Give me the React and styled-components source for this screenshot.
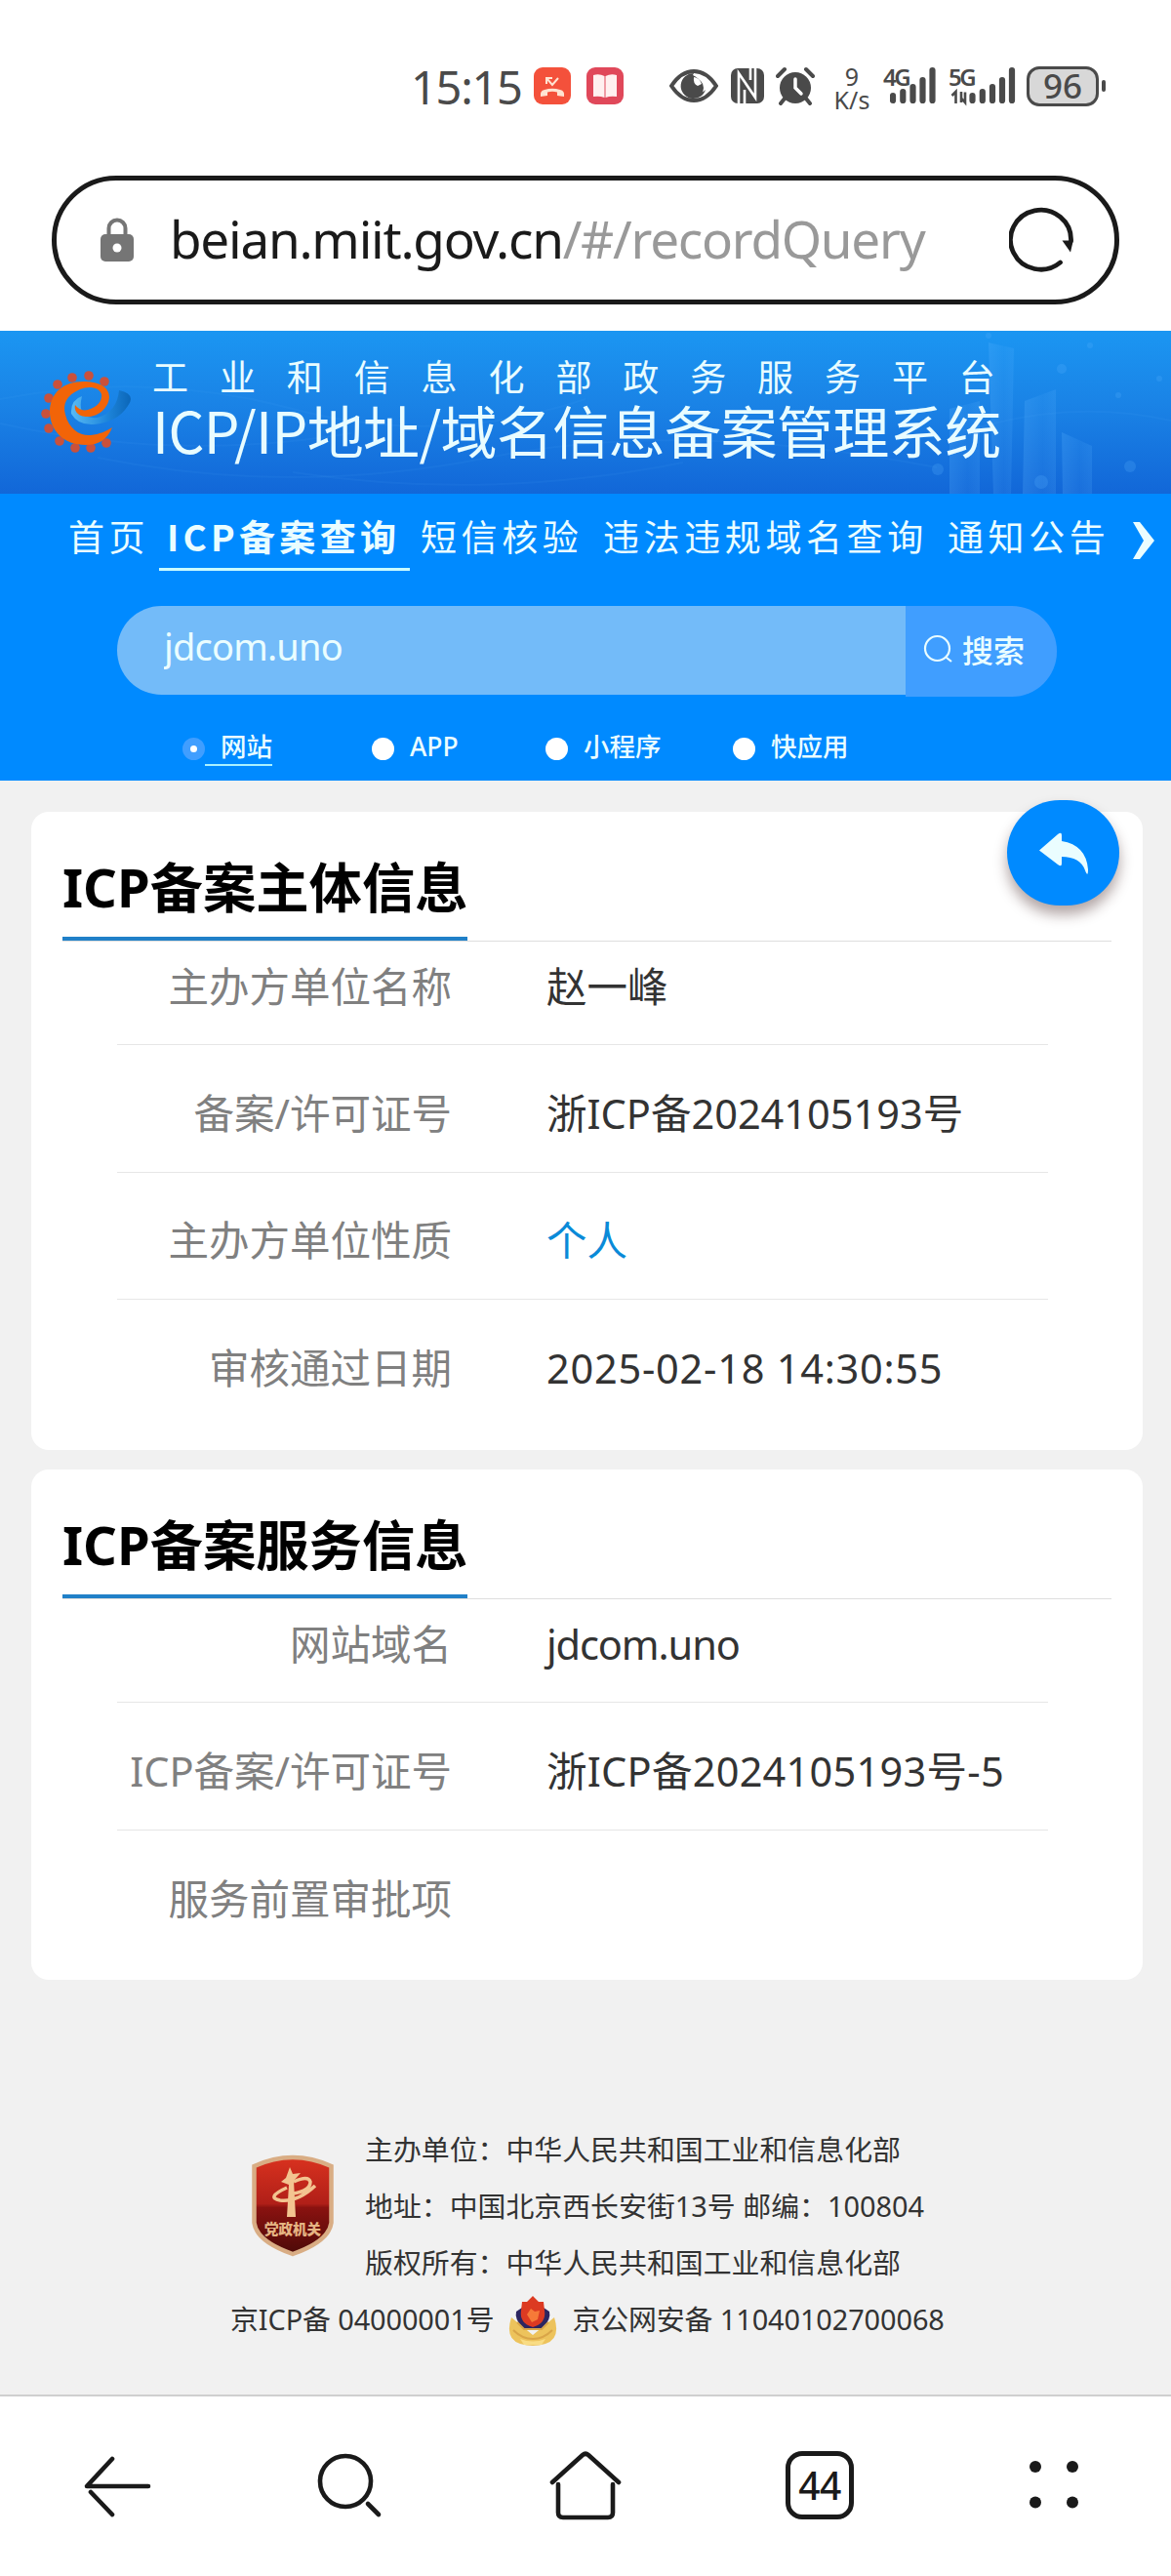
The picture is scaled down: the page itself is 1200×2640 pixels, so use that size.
import React, { useState } from "react";
import styled, { createGlobalStyle } from "styled-components";

const GlobalStyle = createGlobalStyle`
  * {
    box-sizing: border-box;
  }
  body {
    margin: 0;
    background: #f1f1f1;
    font-family: "Noto Sans", "Noto Sans CJK SC", sans-serif;
  }
`;

const StyledPage = styled.div`
  width: 1200px;
  height: 2640px;
  display: flex;
  flex-direction: column;
  overflow: hidden;
  background: #f1f1f1;
`;

/* phone status bar */
const StyledStatusBar = styled.div`
  height: 180px;
  padding: 66px 0 0 421px;
  display: flex;
  align-items: flex-start;
  background: #fff;
  color: #4a4a4a;
`;
const StyledClock = styled.div`
  width: 126px;
  height: 44px;
  font-size: 47px;
  line-height: 46px;
  letter-spacing: -1.3px;
  white-space: nowrap;
`;
const StyledStatusIcon = styled.svg`
  flex: none;
  width: ${p => p.$w}px;
  height: 44px;
  margin-right: ${p => p.$gap}px;
`;
const StyledSpeed = styled.div`
  flex: none;
  width: 42px;
  margin-right: 11px;
  text-align: center;
  font-size: 25px;
  line-height: 24px;
`;
const StyledNetwork = styled.div`
  flex: none;
  display: flex;
  width: ${p => p.$w}px;
  margin-right: ${p => p.$gap}px;
`;
const StyledNetworkType = styled.div`
  flex: none;
  width: ${p => p.$w}px;
  font-size: 24px;
  font-weight: 600;
  line-height: 26px;
  letter-spacing: -2.5px;
  white-space: nowrap;
`;
const StyledBattery = styled.div`
  flex: none;
  width: 74px;
  height: 41px;
  margin-top: 2px;
  border: 3.5px solid #4a4a4a;
  border-radius: 13px;
  background: #d8d8d8;
  font-size: 35px;
  font-weight: 500;
  line-height: 34px;
  text-align: center;
`;
const StyledBatteryTip = styled.div`
  width: 4px;
  height: 12px;
  margin: 16px 0 0 3px;
  border-radius: 2px;
  background: #4a4a4a;
`;

/* address bar */
const StyledAddressArea = styled.div`
  height: 159px;
  padding: 0 53px;
  background: #fff;
`;
const StyledAddressBar = styled.div`
  height: 132px;
  padding: 0 42px 0 45px;
  border: 5px solid #1a1a1a;
  border-radius: 66px;
  display: flex;
  align-items: center;
`;
const StyledUrl = styled.div`
  flex: 1;
  margin: 0 0 2px 37px;
  color: #1a1a1a;
  font-size: 53px;
  line-height: 70px;
  letter-spacing: -1.25px;
  white-space: nowrap;
`;
const StyledUrlPath = styled.span`
  color: #999;
`;

/* site banner */
const StyledBanner = styled.div`
  position: relative;
  height: 167px;
  display: flex;
  padding-left: 38px;
  background: linear-gradient(180deg, #1b96f2 0%, #1a83e6 45%, #1267d8 100%);
`;
const StyledBannerArt = styled.svg`
  position: absolute;
  top: 0;
  left: 0;
`;
const StyledLogo = styled.svg`
  position: relative;
  width: 100px;
  height: 90px;
  margin-top: 38px;
`;
const StyledTitles = styled.div`
  position: relative;
  margin: 18px 0 0 18px;
  color: #e8fcff;
  font-family: "Noto Sans CJK SC", sans-serif;
  white-space: nowrap;
`;
const StyledPlatform = styled.div`
  font-size: 37px;
  line-height: 56px;
  letter-spacing: 31.9px;
`;
const StyledSystem = styled.div`
  font-size: 58px;
  line-height: 54px;
  letter-spacing: -0.6px;
`;

/* blue search panel */
const StyledPanel = styled.div`
  height: 294px;
  background: #008aff;
  color: #eafdff;
`;
const StyledNav = styled.div`
  height: 115px;
  padding: 20px 0 0 59px;
  display: flex;
  align-items: flex-start;
`;
const StyledNavItem = styled.div`
  height: 59px;
  width: ${p => p.$w}px;
  padding-left: ${p => (p.$active ? 8 : 11)}px;
  border-bottom: 3px solid ${p => (p.$active ? "#c9fbff" : "transparent")};
  font-family: "Noto Sans CJK SC", sans-serif;
  font-size: 37px;
  font-weight: ${p => (p.$active ? 700 : 400)};
  line-height: 46px;
  letter-spacing: ${p => (p.$active ? 4.3 : 4.6)}px;
  white-space: nowrap;
  cursor: pointer;
`;
const StyledNavMore = styled.svg`
  width: 26px;
  height: 40px;
  margin: 8px 0 0 12px;
`;
const StyledSearch = styled.div`
  height: 93px;
  margin: 0 117px 0 120px;
  display: flex;
  align-items: flex-start;
`;
const StyledSearchInput = styled.input`
  width: 808px;
  height: 91px;
  padding: 0 0 9px 48px;
  border: none;
  outline: none;
  border-radius: 46px 0 0 46px;
  background: #73bbf9;
  color: #eafdff;
  font-family: "Noto Sans", sans-serif;
  font-size: 38px;
  letter-spacing: -0.8px;
`;
const StyledSearchBtn = styled.button`
  width: 155px;
  height: 93px;
  padding: 0 0 5px 18px;
  border: none;
  border-radius: 0 46px 46px 0;
  background: #409eff;
  color: #eafdff;
  display: flex;
  align-items: center;
  gap: 9px;
  font-family: "Noto Sans CJK SC", sans-serif;
  font-size: 32px;
  font-weight: 500;
  cursor: pointer;
`;
const StyledTypes = styled.div`
  display: flex;
  padding: 33px 0 0 187px;
`;
const StyledType = styled.div`
  width: ${p => p.$w}px;
  height: 40px;
  display: flex;
  align-items: center;
  cursor: pointer;
`;
const StyledTypeDot = styled.div`
  width: 23px;
  height: 23px;
  border-radius: 50%;
  border: ${p => (p.$active ? "8.5px solid #409eff" : "none")};
  background: #fff;
`;
const StyledTypeName = styled.div`
  height: 36px;
  padding-left: 16px;
  border-bottom: 2px solid ${p => (p.$active ? "#a9f0ff" : "transparent")};
  font-family: "Noto Sans", "Noto Sans CJK SC", sans-serif;
  font-size: 26.5px;
  font-weight: 500;
  line-height: 33px;
`;

/* record cards */
const StyledContent = styled.div`
  position: relative;
  padding: 32px 29px 0 32px;
  display: flex;
  flex-direction: column;
  gap: 20px;
`;
const StyledBackBtn = styled.button`
  position: absolute;
  top: 20px;
  left: 1032px;
  width: 115px;
  height: 108px;
  padding: 0;
  border: none;
  border-radius: 58px;
  background: #008aff;
  box-shadow: 0 9px 14px rgba(60, 30, 30, 0.4);
  cursor: pointer;
`;
const StyledCard = styled.div`
  height: ${p => p.$h}px;
  padding: 34px 32px 0;
  border-radius: 18px;
  background: #fff;
`;
const StyledCardHead = styled.div`
  height: 99px;
  border-bottom: 1px solid #dedede;
`;
const StyledCardTitle = styled.div`
  width: 415px;
  height: 98px;
  border-bottom: 4px solid #2080c8;
  color: #000;
  font-family: "Noto Sans", "Noto Sans CJK SC", sans-serif;
  font-size: 54.3px;
  font-weight: 700;
  line-height: 86px;
  white-space: nowrap;
`;
const StyledRows = styled.div`
  margin: -24px 65px 0 56px;
`;
const StyledRow = styled.div`
  height: 130.3px;
  padding-top: 10px;
  display: flex;
  align-items: center;
  border-bottom: 1px solid #e6e6e6;
  font-size: 41.5px;
  line-height: 60px;
  white-space: nowrap;
  &:last-child {
    border: none;
  }
`;
const StyledLabel = styled.div`
  width: 343px;
  margin-right: 97px;
  color: #808080;
  text-align: right;
`;
const StyledValue = styled.div`
  color: ${p => (p.$link ? "#0a8ad8" : "#333")};
  letter-spacing: ${p => p.$spacing || 0}px;
`;

/* footer */
const StyledFooter = styled.div`
  flex: 1;
  padding-top: 145px;
  color: #333;
  font-size: 28.9px;
  white-space: nowrap;
`;
const StyledSponsor = styled.div`
  display: flex;
  padding-left: 257px;
`;
const StyledShield = styled.svg`
  width: 86px;
  height: 106px;
  margin: 34px 31px 0 0;
`;
const StyledFooterLine = styled.div`
  height: 58px;
  line-height: 58px;
`;
const StyledLicences = styled.div`
  height: 54px;
  display: flex;
  align-items: center;
  padding-left: 236px;
  letter-spacing: -0.1px;
`;
const StyledPoliceBadge = styled.svg`
  width: 50px;
  height: 54px;
  margin: 6px 15px 0;
`;

/* browser toolbar */
const StyledToolbar = styled.div`
  height: 186px;
  padding: 47px 72px 0;
  border-top: 2px solid #cfcfcf;
  background: #fff;
  display: flex;
  justify-content: space-between;
  align-items: flex-start;
`;
const StyledTool = styled.svg`
  width: 96px;
  height: 90px;
  fill: none;
  stroke: #1a1a1a;
  stroke-width: 4.6;
  stroke-linecap: round;
  stroke-linejoin: round;
`;
const StyledTabCount = styled.div`
  width: 70px;
  height: 70px;
  margin: 9px 13px 0;
  border: 5px solid #1a1a1a;
  border-radius: 17px;
  color: #1a1a1a;
  font-size: 39px;
  font-weight: 500;
  line-height: 59px;
  letter-spacing: -0.6px;
  text-align: center;
`;

const SignalBars = () => (
  <g stroke="#4a4a4a" strokeWidth="6.2" strokeLinecap="round">
    <path d="M11 32v5M21.300 28v9M31.500 23v14M41.500 16v21M51.500 6v31" />
  </g>
);

const StatusBar = () => (
  <StyledStatusBar>
    <StyledClock>15:15</StyledClock>
    <StyledStatusIcon $w={38} $gap={16} viewBox="0 0 38 44">
      <rect y="3" width="38" height="38" rx="9" fill="#f4513b" />
      <path
        d="M7 33q-1-6 4-7 8-2.500 16 0 5 1 4 7l-7-1v-3.500q-5-1.500-10 0V32z"
        fill="#ffe3d2"
      />
      <path
        d="M13 20v-6h6M13 14l6 7 6-7"
        fill="none"
        stroke="#ffe3d2"
        strokeWidth="2"
      />
    </StyledStatusIcon>
    <StyledStatusIcon $w={38} $gap={47} viewBox="0 0 38 44">
      <rect y="3" width="38" height="38" rx="9" fill="#e0485a" />
      <path
        d="M7 11q6-2 11.500 1V34q-5-2-11.500-1zM31 11q-6-2-11.500 1V34q5-2 11.500-1z"
        fill="#fff0f0"
      />
    </StyledStatusIcon>
    <StyledStatusIcon $w={50} $gap={13} viewBox="0 0 50 44">
      <path
        d="M2 22Q12 7 25 7t23 15Q38 37 25 37T2 22z"
        fill="none"
        stroke="#4a4a4a"
        strokeWidth="4"
      />
      <path
        d="M25 9a13 13 0 1 0 12 17q-3 4-8 2 4-3 3-8-1-6-8-9z"
        fill="#4a4a4a"
      />
      <circle cx="25" cy="24" r="10" fill="#4a4a4a" />
      <path d="M25 13q-1 7 4 9l4-2q-2-6-8-7z" fill="#fff" />
    </StyledStatusIcon>
    <StyledStatusIcon $w={34} $gap={12} viewBox="0 0 34 44">
      <rect y="4" width="34" height="36" rx="7" fill="#4a4a4a" />
      <path
        d="M8 40V9l17 25V4M14 40V26M20 4v12"
        fill="none"
        stroke="#fff"
        strokeWidth="2.600"
      />
    </StyledStatusIcon>
    <StyledStatusIcon $w={40} $gap={17} viewBox="0 0 40 44">
      <circle cx="20" cy="24" r="16" fill="#4a4a4a" />
      <path
        d="M2 12l7-7M38 12l-7-7M9 35l-4 5M31 35l4 5"
        stroke="#4a4a4a"
        strokeWidth="4"
        strokeLinecap="round"
      />
      <path
        d="M20 15v9l6 6"
        fill="none"
        stroke="#fff"
        strokeWidth="3.500"
        strokeLinecap="round"
      />
    </StyledStatusIcon>
    <StyledSpeed>
      9<br />
      K/s
    </StyledSpeed>
    <StyledNetwork $w={57} $gap={10}>
      <StyledNetworkType $w={7}>4G</StyledNetworkType>
      <StyledStatusIcon $w={56} $gap={0} viewBox="8 0 56 44">
        <SignalBars />
      </StyledStatusIcon>
    </StyledNetwork>
    <StyledNetwork $w={70} $gap={10}>
      <StyledNetworkType $w={1}>5G</StyledNetworkType>
      <StyledStatusIcon $w={68} $gap={0} viewBox="-4 0 68 44">
        <path
          d="M-1.500 32l4-4v12M12 28.500V39l-4-4.500M8 28v11"
          fill="none"
          stroke="#4a4a4a"
          strokeWidth="2.600"
        />
        <g transform="translate(8.500 0)">
          <SignalBars />
        </g>
      </StyledStatusIcon>
    </StyledNetwork>
    <StyledBattery>96</StyledBattery>
    <StyledBatteryTip />
  </StyledStatusBar>
);

const AddressBar = () => (
  <StyledAddressArea>
    <StyledAddressBar>
      <svg width="34" height="46" viewBox="0 0 34 46">
        <rect y="17" width="34" height="28" rx="5" fill="#757575" />
        <path
          d="M8.500 18V11a8.500 8.500 0 0 1 17 0v7"
          fill="none"
          stroke="#757575"
          strokeWidth="4"
        />
        <circle cx="17" cy="31" r="4.500" fill="#fff" />
      </svg>
      <StyledUrl>
        beian.miit.gov.cn<StyledUrlPath>/#/recordQuery</StyledUrlPath>
      </StyledUrl>
      <svg width="66" height="68" viewBox="1 1 66 68">
        <path
          d="M53.500 58A31 30.500 0 1 1 64.500 36"
          fill="none"
          stroke="#1a1a1a"
          strokeWidth="4.800"
          strokeLinecap="round"
        />
        <path d="M55.500 35.500h11.300l-2.800 12z" fill="#1a1a1a" />
      </svg>
    </StyledAddressBar>
  </StyledAddressArea>
);

const GEAR_TEETH = [
  [62, 13],
  [46, 7],
  [29, 9],
  [14, 16],
  [5, 30],
  [2, 46],
  [5, 61],
  [16, 74],
  [32, 81],
  [48, 81],
  [64, 76]
];

const Banner = () => (
  <StyledBanner>
    <StyledBannerArt width="1200" height="167" viewBox="0 0 1200 167">
      <defs>
        <linearGradient id="tower" x1="0" y1="0" x2="1" y2="0">
          <stop offset="0" stopColor="#5cb4ff" stopOpacity="0.24" />
          <stop offset="0.6" stopColor="#5cb4ff" stopOpacity="0.1" />
          <stop offset="1" stopColor="#5cb4ff" stopOpacity="0.18" />
        </linearGradient>
      </defs>
      <g fill="url(#tower)">
        <path d="M1013 12l26 6-3 149h-18z" />
        <path d="M973 80l31-8v95h-31z" />
        <path d="M1050 72l32-12v107h-34z" />
        <path d="M1088 104l31 14v49h-30z" />
      </g>
      <g fill="#5cb4ff" opacity="0.22">
        <circle cx="1088" cy="39" r="5" />
        <circle cx="1188" cy="49" r="3" />
        <circle cx="1146" cy="66" r="3" />
        <circle cx="961" cy="142" r="6" />
        <circle cx="1158" cy="139" r="6" />
        <circle cx="1067" cy="155" r="7" />
        <circle cx="1117" cy="15" r="3" />
        <circle cx="1013" cy="5" r="3" />
      </g>
      <g fill="none" stroke="#5cb4ff" strokeOpacity="0.08" strokeWidth="2">
        <path d="M0 70q150-30 300 10t300-10" />
        <path d="M100 130q200 40 400 0t460 10" />
        <path d="M300 145q200 30 400-10" />
        <path d="M0 95q180 40 360 10" />
        <path d="M1000 100q100-30 200-8" />
      </g>
    </StyledBannerArt>
    <StyledLogo viewBox="0 -1 100 90">
      <defs>
        <linearGradient id="swoosh">
          <stop offset="0" stopColor="#58baf4" />
          <stop offset="0.6" stopColor="#1e86dc" />
          <stop offset="1" stopColor="#0b66b8" />
        </linearGradient>
      </defs>
      <path
        d="M84 22Q102 26 93 38 82 55 58 57 42 58 35 46 34 32 46 28 40 52 62 50 82 44 84 22z"
        fill="url(#swoosh)"
      />
      <g fill="#c9513c">
        {GEAR_TEETH.map(([x, y]) => (
          <circle key={`${x}-${y}`} cx={x + 7} cy={y} r="4.800" />
        ))}
      </g>
      <path
        d="M77 60Q70 78 50 78C26 78 13 62 13 44 13 24 28 13 47 13 66 13 74 20 74 29 73 42 60 50 50 49 40 48 38 42 39 37Q44 44 52 42C62 39 67 33 66 26 64 19 53 17 44 21 30 27 26 36 29 47 33 62 44 69 55 68 64 67 71 64 77 60z"
        fill="#f26408"
      />
    </StyledLogo>
    <StyledTitles>
      <StyledPlatform>工业和信息化部政务服务平台</StyledPlatform>
      <StyledSystem>ICP/IP地址/域名信息备案管理系统</StyledSystem>
    </StyledTitles>
  </StyledBanner>
);

const NAV_ITEMS = [
  { name: "首页", w: 104 },
  { name: "ICP备案查询", w: 257, active: true },
  { name: "短信核验", w: 187 },
  { name: "违法违规域名查询", w: 353 },
  { name: "通知公告", w: 187 }
];

const TYPES = [
  { name: "网站", w: 194 },
  { name: "APP", w: 178 },
  { name: "小程序", w: 192 },
  { name: "快应用", w: 140 }
];

const SearchPanel = () => {
  const [keyword, setKeyword] = useState("jdcom.uno");
  const [type, setType] = useState("网站");
  return (
    <StyledPanel>
      <StyledNav>
        {NAV_ITEMS.map(item => (
          <StyledNavItem key={item.name} $w={item.w} $active={item.active}>
            {item.name}
          </StyledNavItem>
        ))}
        <StyledNavMore viewBox="0 0 26 40">
          <path d="M2 1h7l15 19L9 39H2l11-19z" fill="#eafdff" />
        </StyledNavMore>
      </StyledNav>
      <StyledSearch>
        <StyledSearchInput
          value={keyword}
          onChange={e => setKeyword(e.target.value)}
        />
        <StyledSearchBtn>
          <svg width="31" height="31" viewBox="0 0 31 31">
            <path
              d="M24 24l5 4M27 14.500a12.500 12.500 0 1 1-25 0 12.500 12.500 0 0 1 25 0z"
              fill="none"
              stroke="#eafdff"
              strokeWidth="2.200"
            />
          </svg>
          搜索
        </StyledSearchBtn>
      </StyledSearch>
      <StyledTypes>
        {TYPES.map(({ name, w }) => (
          <StyledType key={name} $w={w} onClick={() => setType(name)}>
            <StyledTypeDot $active={name === type} />
            <StyledTypeName $active={name === type}>{name}</StyledTypeName>
          </StyledType>
        ))}
      </StyledTypes>
    </StyledPanel>
  );
};

const OWNER_ROWS = [
  { label: "主办方单位名称", value: "赵一峰" },
  { label: "备案/许可证号", value: "浙ICP备2024105193号" },
  { label: "主办方单位性质", value: "个人", link: true },
  { label: "审核通过日期", value: "2025-02-18 14:30:55", spacing: 0.75 }
];

const SERVICE_ROWS = [
  { label: "网站域名", value: "jdcom.uno", spacing: -1.1 },
  {
    label: "ICP备案/许可证号",
    value: "浙ICP备2024105193号-5",
    spacing: 0.25
  },
  { label: "服务前置审批项", value: "" }
];

const RecordCard = ({ title, rows, height }) => (
  <StyledCard $h={height}>
    <StyledCardHead>
      <StyledCardTitle>{title}</StyledCardTitle>
    </StyledCardHead>
    <StyledRows>
      {rows.map(row => (
        <StyledRow key={row.label}>
          <StyledLabel>{row.label}</StyledLabel>
          <StyledValue $link={row.link} $spacing={row.spacing}>
            {row.value}
          </StyledValue>
        </StyledRow>
      ))}
    </StyledRows>
  </StyledCard>
);

const Footer = () => (
  <StyledFooter>
    <StyledSponsor>
      <StyledShield viewBox="0 0 86 106">
        <defs>
          <linearGradient id="shield" x1="0" y1="0" x2="0" y2="1">
            <stop offset="0" stopColor="#d9321f" />
            <stop offset="0.48" stopColor="#b01f18" />
            <stop offset="0.52" stopColor="#8a1210" />
            <stop offset="1" stopColor="#4c0a08" />
          </linearGradient>
        </defs>
        <path
          d="M3.500 12Q43-6 82.500 12V70Q80 89 43 102 6 89 3.500 70z"
          fill="url(#shield)"
          stroke="#d9ad84"
          strokeWidth="4.500"
        />
        <path
          d="M37 64l2-33-8-3 5-4 4-11 3 7 8-1-7 8 2 37z"
          fill="#f3c490"
        />
        <path
          d="M44 28q15-7 17 0 0 9-17 12M37 34q-22 10-7 13 18 2 36-15"
          fill="none"
          stroke="#f3c490"
          strokeWidth="3.500"
        />
        <text
          x="43"
          y="82"
          fill="#e5b483"
          fontFamily="Noto Sans CJK SC"
          fontSize="14.500"
          fontWeight="900"
          textAnchor="middle"
        >
          党政机关
        </text>
      </StyledShield>
      <div>
        <StyledFooterLine>
          主办单位：中华人民共和国工业和信息化部
        </StyledFooterLine>
        <StyledFooterLine>
          地址：中国北京西长安街13号 邮编：100804
        </StyledFooterLine>
        <StyledFooterLine>
          版权所有：中华人民共和国工业和信息化部
        </StyledFooterLine>
      </div>
    </StyledSponsor>
    <StyledLicences>
      京ICP备 04000001号
      <StyledPoliceBadge viewBox="0 0 50 54">
        <path
          d="M3 24Q-4 46 12 51q13 4 26 0Q54 46 47 24L25 42z"
          fill="#edc35c"
        />
        <path d="M12 46q13 5 26 0l-4 6H16z" fill="#f9dc84" />
        <path
          d="M8 18q4-3 8-5h18q4 2 8 5 2 8-7 17-10 4-20 0Q6 26 8 18z"
          fill="#2c2560"
        />
        <path
          d="M14 8l5 0 6-6 6 6 5 0 1 9q2 13-12 17-14-4-12-17z"
          fill="#dc3a22"
        />
        <path d="M19 21l4-6 4 3 5-1-2 9-6 3z" fill="#f67a38" />
        <path
          d="M9 29l7 7h18l7-7M5 37q9 9 20 9t20-9"
          fill="none"
          stroke="#d9a548"
          strokeWidth="2"
        />
      </StyledPoliceBadge>
      京公网安备 11040102700068
    </StyledLicences>
  </StyledFooter>
);

const Toolbar = () => (
  <StyledToolbar>
    <StyledTool viewBox="0 0 96 90">
      <path d="M80 45H17L43 17M21 51l22 23" />
    </StyledTool>
    <StyledTool viewBox="0 0 96 90">
      <circle cx="42" cy="40" r="26" />
      <path d="M65 63l11 11" />
    </StyledTool>
    <StyledTool viewBox="0 0 96 90">
      <path d="M14 41L45 13q3-2.500 6 0l31 28M20 43v29q0 5 5 5h46q5 0 5-5V43" />
    </StyledTool>
    <StyledTabCount>44</StyledTabCount>
    <StyledTool viewBox="0 0 96 90">
      <g fill="#1a1a1a" stroke="none">
        <circle cx="29" cy="25" r="6" />
        <circle cx="67" cy="25" r="6" />
        <circle cx="29" cy="61.500" r="6" />
        <circle cx="67" cy="61.500" r="6" />
      </g>
    </StyledTool>
  </StyledToolbar>
);

const App = () => (
  <StyledPage>
    <GlobalStyle />
    <StatusBar />
    <AddressBar />
    <Banner />
    <SearchPanel />
    <StyledContent>
      <RecordCard title="ICP备案主体信息" rows={OWNER_ROWS} height={654} />
      <RecordCard title="ICP备案服务信息" rows={SERVICE_ROWS} height={523} />
      <StyledBackBtn>
        <svg width="115" height="108" viewBox="0 0 115 108">
          <path
            d="M33 51.500L52 35q4-3 4 1v6q25 4 27 29 0 9-3 1-5-14-24-14v7q0 4-4 1z"
            fill="#eafdff"
          />
        </svg>
      </StyledBackBtn>
    </StyledContent>
    <Footer />
    <Toolbar />
  </StyledPage>
);

export default App;
